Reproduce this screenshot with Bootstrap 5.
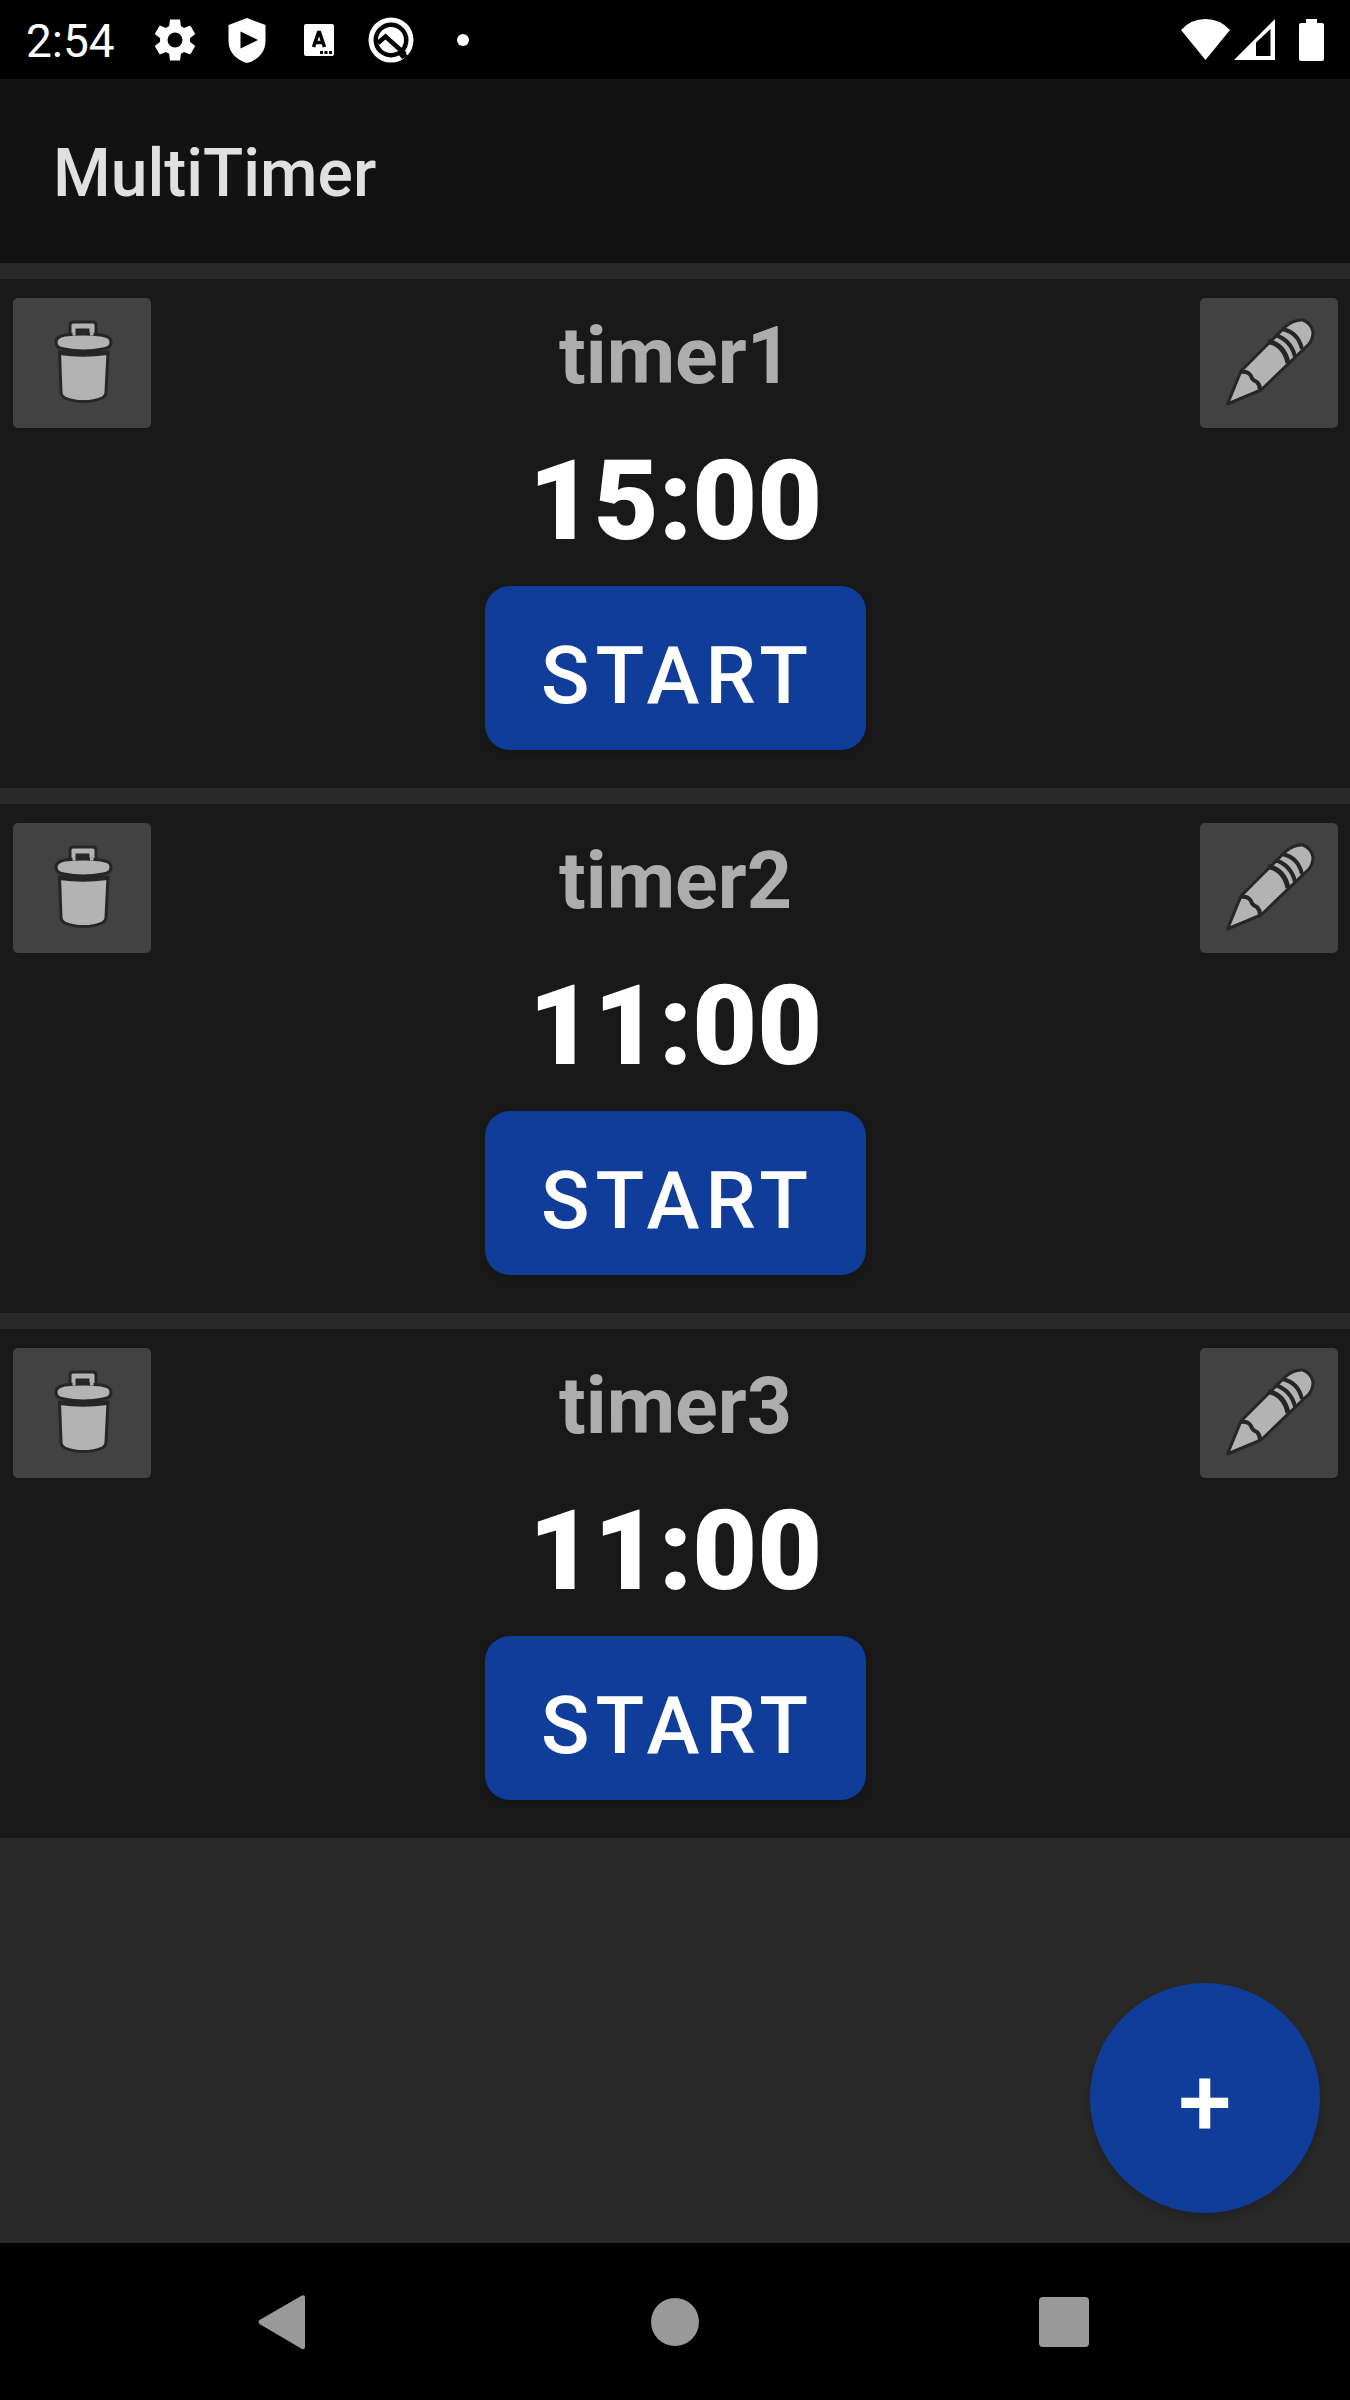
<!DOCTYPE html>
<html lang="en">
<head>
<meta charset="utf-8">
<meta name="viewport" content="width=device-width, initial-scale=1">
<title>MultiTimer</title>
<link href="https://cdn.jsdelivr.net/npm/bootstrap@5.3.0/dist/css/bootstrap.min.css" rel="stylesheet">
<style>
  body { background: #292929; color: #fff; font-family: Roboto, "Noto Sans", sans-serif; }
  svg { display: block; }
  .status-bar { background: #000; height: 79px; padding: 0 26px; }
  .clock { font-size: 46px; line-height: 56px; width: 119px; padding-top: 3px; }
  .status-icons { gap: 12px; }
  .app-bar { background: #121212; height: 184px; padding: 6px 53px 0; }
  .app-title { font-size: 66px; line-height: 78px; font-weight: 500; color: #e0e0e0; }
  .timer-list { gap: 16px; padding-top: 16px; padding-bottom: 290px; }
  .timer-item { background: #191919; padding: 19px 12px 38px 13px; }
  .tool-btn { width: 138px; height: 130px; background: #424242; border-radius: 5px; }
  .timer-main { padding-top: 11px; }
  .timer-name { font-size: 79px; line-height: 94px; font-weight: 700; color: #adadad; margin-bottom: 32px; }
  .timer-time { font-size: 112px; line-height: 131px; font-weight: 900; margin-bottom: 20px; }
  .start-btn { background: #113d9a; color: #fff; border-radius: 25px; padding: 43px 52px 27px 56px; font-size: 80px; line-height: 94px; font-weight: 500; letter-spacing: 6px; box-shadow: 0 3px 6px rgba(0, 0, 0, .15); }
  .fab { right: 30px; bottom: 30px; width: 230px; height: 230px; padding: 8px 0 0; background: #113d9a; color: #fff; font-size: 96px; line-height: 104px; font-weight: 500; box-shadow: 0 6px 14px rgba(0, 0, 0, .2); }
  .start-btn:hover, .fab:hover { background: #1749b3; color: #fff; }
  .nav-keys { background: #000; height: 157px; padding: 0 91px; }
</style>
</head>
<body>
<svg class="d-none" aria-hidden="true">
  <symbol id="trash" viewBox="0 0 138 130">
    <g fill="#b3b3b3" stroke="#262626" stroke-width="3">
      <path d="M46.500 54L48 94q0 4 4 6 8 3.500 18.500 3.500T89 100q4-2 4-6L95 54z" />
      <path d="M46 53l.5 4q23 3.500 48 0l.5-4z" fill="#262626" stroke="none"/>
      <path d="M57 40V27q0-3 3-3h20q3 0 3 3v13z"/>
      <path d="M62.500 38v-7.500h14V38z" fill="#262626" stroke="none"/>
      <path d="M43 44c0-5 5-6 9-7q18-2 36 0c5 1 10 2 10 7s-3 6-8 7q-20 4-39 0c-5-1-8-2-8-7z"/>
      <path d="M59.500 36h3M77 36h3.500" stroke="#b3b3b3" stroke-width="3"/>
    </g>
  </symbol>
  <symbol id="pencil" viewBox="0 0 138 130">
    <g fill="#b3b3b3" stroke="#262626" stroke-width="3" stroke-linejoin="round">
      <path d="M27.500 106L41 73 85 29q9-8 18-7 8 3 10 12 0 7-4 12L61 92z"/>
      <g fill="none" stroke-width="4">
        <path d="M41 74q7-1 10 4 1 4 6 6 3 3 3 8"/>
        <path d="M68 43.500q16 3 20 21.500" stroke-width="5"/>
        <path d="M75 37q16 5 20 21.500"/>
        <path d="M82 31q16 3 20 20"/>
      </g>
    </g>
  </symbol>
</svg>

<div class="min-vh-100 d-flex flex-column">
  <div class="status-bar d-flex align-items-center justify-content-between">
    <div class="d-flex align-items-center">
      <span class="clock">2:54</span>
      <div class="status-icons d-flex align-items-center">
        <svg width="60" height="60" viewBox="0 0 60 60" role="img" aria-label="Settings"><g transform="translate(30 30)" fill="#fff"><circle r="15"/><path d="M-6-13L-5-20.500H5L6-13zM-6 13L-5 20.500H5L6 13z"/><path transform="rotate(60)" d="M-6-13L-5-20.500H5L6-13zM-6 13L-5 20.500H5L6 13z"/><path transform="rotate(120)" d="M-6-13L-5-20.500H5L6-13zM-6 13L-5 20.500H5L6 13z"/><circle r="7.500" fill="#000"/></g></svg>
        <svg width="60" height="60" viewBox="0 0 60 60" role="img" aria-label="Play Protect"><path fill="#fff" d="M30 8L48.500 15V31C48.500 42 41 50 30 53 19 50 11.500 42 11.500 31V15z"/><path d="M23.500 21.500V38.500L41 30z"/></svg>
        <svg width="60" height="60" viewBox="0 0 60 60" role="img" aria-label="Keyboard"><rect x="15" y="14" width="30" height="32" rx="2" fill="#fff"/><path d="M24.500 37l5-14.500h1L35.500 37M26 32.500h8" fill="none" stroke="#000" stroke-width="3.500"/><path d="M31 41h3v3h-3zM35.500 41h3v3h-3zM40 41h3v3h-3z"/></svg>
        <svg width="60" height="60" viewBox="0 0 60 60" role="img" aria-label="Debugging"><circle cx="30" cy="30" r="20" fill="none" stroke="#fff" stroke-width="5"/><circle cx="30" cy="30" r="13" fill="#fff"/><path d="M17 33l7.500-6.500L44 44" fill="none" stroke="#000" stroke-width="4.500"/><path d="M41 49l6-3-5-6-5 4z"/></svg>
        <svg width="60" height="60" viewBox="0 0 60 60" role="img" aria-label="More notifications"><circle cx="30" cy="30" r="6" fill="#fff"/></svg>
      </div>
    </div>
    <div class="d-flex align-items-center">
      <svg class="me-1" width="49" height="42" viewBox="0 0 49 42" role="img" aria-label="Wi-Fi"><path fill="#fff" d="M0 11Q10 0 24.500 0T49 11L24.500 41z"/></svg>
      <svg class="me-4" width="41" height="42" viewBox="0 0 41 42" role="img" aria-label="Mobile signal"><path fill="#fff" d="M41 0V41H0z"/><path d="M22 23.500L36.500 10V37H22z"/></svg>
      <svg width="25" height="42" viewBox="0 0 25 42" role="img" aria-label="Battery"><path fill="#fff" d="M7 0H18V4H23q2 0 2 2V40q0 2-2 2H2q-2 0-2-2V6Q0 4 2 4H7z"/></svg>
    </div>
  </div>

  <header class="app-bar d-flex align-items-center">
    <h1 class="app-title m-0">MultiTimer</h1>
  </header>

  <main class="flex-grow-1 position-relative">
    <div class="timer-list d-flex flex-column">
      <section class="timer-item d-flex justify-content-between align-items-start">
        <button type="button" class="tool-btn btn p-0 border-0" aria-label="Delete timer1"><svg width="138" height="130"><use href="#trash"/></svg></button>
        <div class="timer-main d-flex flex-column align-items-center">
          <h2 class="timer-name mt-0">timer1</h2>
          <div class="timer-time">15:00</div>
          <button type="button" class="start-btn btn border-0">START</button>
        </div>
        <button type="button" class="tool-btn btn p-0 border-0" aria-label="Edit timer1"><svg width="138" height="130"><use href="#pencil"/></svg></button>
      </section>
      <section class="timer-item d-flex justify-content-between align-items-start">
        <button type="button" class="tool-btn btn p-0 border-0" aria-label="Delete timer2"><svg width="138" height="130"><use href="#trash"/></svg></button>
        <div class="timer-main d-flex flex-column align-items-center">
          <h2 class="timer-name mt-0">timer2</h2>
          <div class="timer-time">11:00</div>
          <button type="button" class="start-btn btn border-0">START</button>
        </div>
        <button type="button" class="tool-btn btn p-0 border-0" aria-label="Edit timer2"><svg width="138" height="130"><use href="#pencil"/></svg></button>
      </section>
      <section class="timer-item d-flex justify-content-between align-items-start">
        <button type="button" class="tool-btn btn p-0 border-0" aria-label="Delete timer3"><svg width="138" height="130"><use href="#trash"/></svg></button>
        <div class="timer-main d-flex flex-column align-items-center">
          <h2 class="timer-name mt-0">timer3</h2>
          <div class="timer-time">11:00</div>
          <button type="button" class="start-btn btn border-0">START</button>
        </div>
        <button type="button" class="tool-btn btn p-0 border-0" aria-label="Edit timer3"><svg width="138" height="130"><use href="#pencil"/></svg></button>
      </section>
    </div>
    <button type="button" class="fab btn border-0 rounded-circle position-absolute" aria-label="Add timer">+</button>
  </main>

  <nav class="nav-keys d-flex align-items-center" aria-label="System navigation">
    <button type="button" class="btn border-0 p-0 flex-fill d-flex justify-content-center" aria-label="Back"><svg width="60" height="60" viewBox="0 0 60 60"><path fill="#999" d="M3.500 28L46 3.500q3-1 3 2V55q0 3-3 2L3.500 32q-2-2 0-4z"/></svg></button>
    <button type="button" class="btn border-0 p-0 flex-fill d-flex justify-content-center" aria-label="Home"><svg width="60" height="60" viewBox="0 0 60 60"><circle cx="30" cy="30" r="24" fill="#999"/></svg></button>
    <button type="button" class="btn border-0 p-0 flex-fill d-flex justify-content-center" aria-label="Recent apps"><svg width="60" height="60" viewBox="0 0 60 60"><rect x="5" y="5" width="50" height="50" rx="4" fill="#999"/></svg></button>
  </nav>
</div>
<script src="https://cdn.jsdelivr.net/npm/bootstrap@5.3.0/dist/js/bootstrap.bundle.min.js"></script>
</body>
</html>
